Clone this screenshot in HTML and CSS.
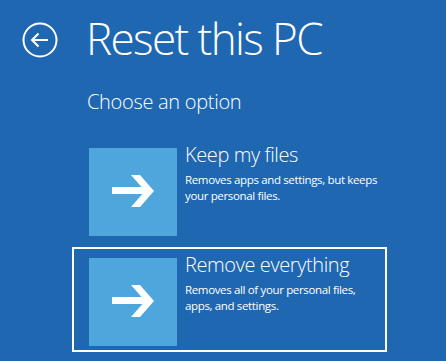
FILE: index.html
```html
<!DOCTYPE html>
<html>
<head>
  <title>Reset this PC</title>
  <link rel="stylesheet" href="styles.css">
</head>

<body>
  <div class="screen">
    <div class="header">
      <svg class="back" width="36" height="36" viewBox="0 0 36 36">
        <circle cx="18" cy="18" r="16.5" fill="none" stroke="#fff" stroke-width="2"/>
        <path d="M10 18 H26 M16.5 11.5 L10 18 L16.5 24.5" fill="none" stroke="#fff" stroke-width="2"/>
      </svg>
      <h1>Reset this PC</h1>
    </div>

    <p class="subtitle">Choose an option</p>

    <div class="options">
      <div class="option">
        <div class="tile">
          <svg width="88" height="88" viewBox="0 0 88 88">
            <rect x="23" y="39" width="36" height="7" fill="#fff"/>
            <polygon points="42,27 51,27 65,43 51,59 42,59 56,43" fill="#fff"/>
          </svg>
        </div>
        <div class="option-text">
          <h2>Keep my files</h2>
          <p>Removes apps and settings, but keeps your personal files.</p>
        </div>
      </div>

      <div class="option selected">
        <div class="tile">
          <svg width="88" height="88" viewBox="0 0 88 88">
            <rect x="23" y="39" width="36" height="7" fill="#fff"/>
            <polygon points="42,27 51,27 65,43 51,59 42,59 56,43" fill="#fff"/>
          </svg>
        </div>
        <div class="option-text">
          <h2>Remove everything</h2>
          <p>Removes all of your personal files, apps, and settings.</p>
        </div>
      </div>
    </div>
  </div>
</body>
</html>
```

FILE: styles.css
```css
* {
  margin: 0;
  padding: 0;
  box-sizing: border-box;
}

body {
  background: #2067b2;
  color: #fff;
  font-family: 'Open Sans', sans-serif;
  overflow: hidden;
}

.screen {
  height: 100vh;
  padding-top: 8px;
}

.header {
  display: flex;
  align-items: center;
  padding-left: 22px;
}

.back {
  margin-top: 4px;
  margin-right: 28px;
}

h1 {
  font-size: 44px;
  font-weight: 300;
  line-height: 60px;
  letter-spacing: -1.6px;
}

.subtitle {
  margin: 20px 0 0 87px;
  font-size: 20px;
  font-weight: 300;
  line-height: 28px;
  letter-spacing: -0.3px;
}

.options {
  display: flex;
  flex-direction: column;
  gap: 5px;
  margin: 21px 0 0 72px;
}

.option {
  display: flex;
  gap: 8px;
  width: 315px;
  padding: 9px 0 4px 15px;
  border: 2px solid transparent;
}

.option.selected {
  border-color: #fff;
}

.tile {
  flex: none;
  width: 88px;
  height: 88px;
  background: #4ea6dc;
}

.tile svg {
  display: block;
}

.option-text h2 {
  margin-top: -3px;
  font-size: 20px;
  font-weight: 300;
  line-height: 20px;
  letter-spacing: -0.4px;
}

.option-text p {
  margin-top: 7px;
  font-size: 11.5px;
  line-height: 16px;
  letter-spacing: -0.35px;
}
```
